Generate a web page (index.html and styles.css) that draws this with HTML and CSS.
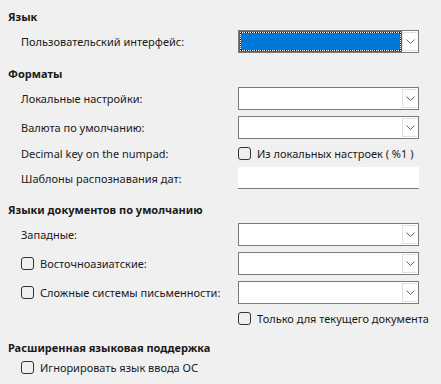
FILE: index.html
```html
<!DOCTYPE html>
<html lang="ru">
<head>
<meta charset="utf-8">
<link rel="stylesheet" href="styles.css">
</head>
<body>
<div class="page">
  <section class="section">
    <div class="heading">Язык</div>
    <div class="rows">
      <div class="row">
        <div class="label">Пользовательский интерфейс:</div>
        <div class="combo focused"><div class="value"><div class="focus"></div></div><div class="btn"><svg width="9" height="5" viewBox="0 0 9 5"><path d="M0.5 0.5 L4.5 4.5 L8.5 0.5" fill="none" stroke="#666" stroke-width="1"/></svg></div></div>
      </div>
    </div>
  </section>

  <section class="section">
    <div class="heading">Форматы</div>
    <div class="rows">
      <div class="row">
        <div class="label">Локальные настройки:</div>
        <div class="combo"><div class="value"></div><div class="btn"><svg width="9" height="5" viewBox="0 0 9 5"><path d="M0.5 0.5 L4.5 4.5 L8.5 0.5" fill="none" stroke="#666" stroke-width="1"/></svg></div></div>
      </div>
      <div class="row">
        <div class="label">Валюта по умолчанию:</div>
        <div class="combo"><div class="value"></div><div class="btn"><svg width="9" height="5" viewBox="0 0 9 5"><path d="M0.5 0.5 L4.5 4.5 L8.5 0.5" fill="none" stroke="#666" stroke-width="1"/></svg></div></div>
      </div>
      <div class="row short">
        <div class="label">Decimal key on the numpad:</div>
        <label class="check"><span class="box"></span><span>Из локальных настроек ( %1 )</span></label>
      </div>
      <div class="row entry-row">
        <div class="label">Шаблоны распознавания дат:</div>
        <div class="entry"></div>
      </div>
    </div>
  </section>

  <section class="section">
    <div class="heading">Языки документов по умолчанию</div>
    <div class="rows">
      <div class="row">
        <div class="label">Западные:</div>
        <div class="combo"><div class="value"></div><div class="btn"><svg width="9" height="5" viewBox="0 0 9 5"><path d="M0.5 0.5 L4.5 4.5 L8.5 0.5" fill="none" stroke="#666" stroke-width="1"/></svg></div></div>
      </div>
      <div class="row">
        <label class="check label-check"><span class="box"></span><span>Восточноазиатские:</span></label>
        <div class="combo"><div class="value"></div><div class="btn"><svg width="9" height="5" viewBox="0 0 9 5"><path d="M0.5 0.5 L4.5 4.5 L8.5 0.5" fill="none" stroke="#666" stroke-width="1"/></svg></div></div>
      </div>
      <div class="row">
        <label class="check label-check"><span class="box"></span><span>Сложные системы письменности:</span></label>
        <div class="combo"><div class="value"></div><div class="btn"><svg width="9" height="5" viewBox="0 0 9 5"><path d="M0.5 0.5 L4.5 4.5 L8.5 0.5" fill="none" stroke="#666" stroke-width="1"/></svg></div></div>
      </div>
      <div class="row short">
        <div class="label"></div>
        <label class="check"><span class="box"></span><span>Только для текущего документа</span></label>
      </div>
    </div>
  </section>

  <section class="section last">
    <div class="heading">Расширенная языковая поддержка</div>
    <div class="rows">
      <div class="row short">
        <label class="check label-check"><span class="box"></span><span>Игнорировать язык ввода ОС</span></label>
      </div>
    </div>
  </section>
</div>
</body>
</html>
```

FILE: styles.css
```css
html, body {
  margin: 0;
  padding: 0;
  background: #f0f0f0;
}
body {
  width: 441px;
  height: 384px;
  overflow: hidden;
  font-family: "Noto Sans", "Open Sans", sans-serif;
  font-size: 11px;
  color: #1a1a1a;
}
.page {
  display: flex;
  flex-direction: column;
  gap: 12px;
  padding: 8px 0 0 8px;
}
.section {
  display: flex;
  flex-direction: column;
  gap: 4px;
}
.section.last {
  gap: 2px;
}
.heading {
  height: 18px;
  line-height: 18px;
  font-weight: 700;
}
.rows {
  display: flex;
  flex-direction: column;
  gap: 6px;
  padding-left: 13px;
}
.row {
  display: flex;
  align-items: center;
  height: 23px;
}
.row.short {
  height: 17px;
}
.row.entry-row {
  height: 22px;
  margin-top: -1px;
}
.label {
  width: 217px;
  flex: none;
  white-space: nowrap;
}
.label-check {
  width: 217px;
  flex: none;
  margin-left: -1px;
  padding-left: 1px;
}
.check {
  display: flex;
  align-items: center;
  gap: 6px;
  white-space: nowrap;
}
.box {
  width: 11px;
  height: 11px;
  border: 1px solid #333;
  border-radius: 3px;
  flex: none;
}
.combo {
  width: 179px;
  height: 21px;
  border: 1px solid #7a7a7a;
  display: flex;
  background: #fff;
}
.value {
  flex: 1;
  position: relative;
}
.focused .value {
  background: #0078d7;
}
.focus {
  position: absolute;
  inset: 1px;
  border: 1px dotted #000;
  outline: 1px dotted #fff;
  outline-offset: -1px;
}
.focused .focus {
  border: 1px dashed #000;
}
.btn {
  width: 15px;
  margin: 1px 1px 1px 0;
  border: 1px solid #e0e0e0;
  border-right: none;
  background: #fdfdfd;
  display: flex;
  align-items: center;
  justify-content: center;
  box-sizing: border-box;
}
.btn svg {
  display: block;
}
.entry {
  width: 181px;
  height: 22px;
  box-sizing: border-box;
  background: #fff;
  border-bottom: 1px solid #7a7a7a;
}
```
